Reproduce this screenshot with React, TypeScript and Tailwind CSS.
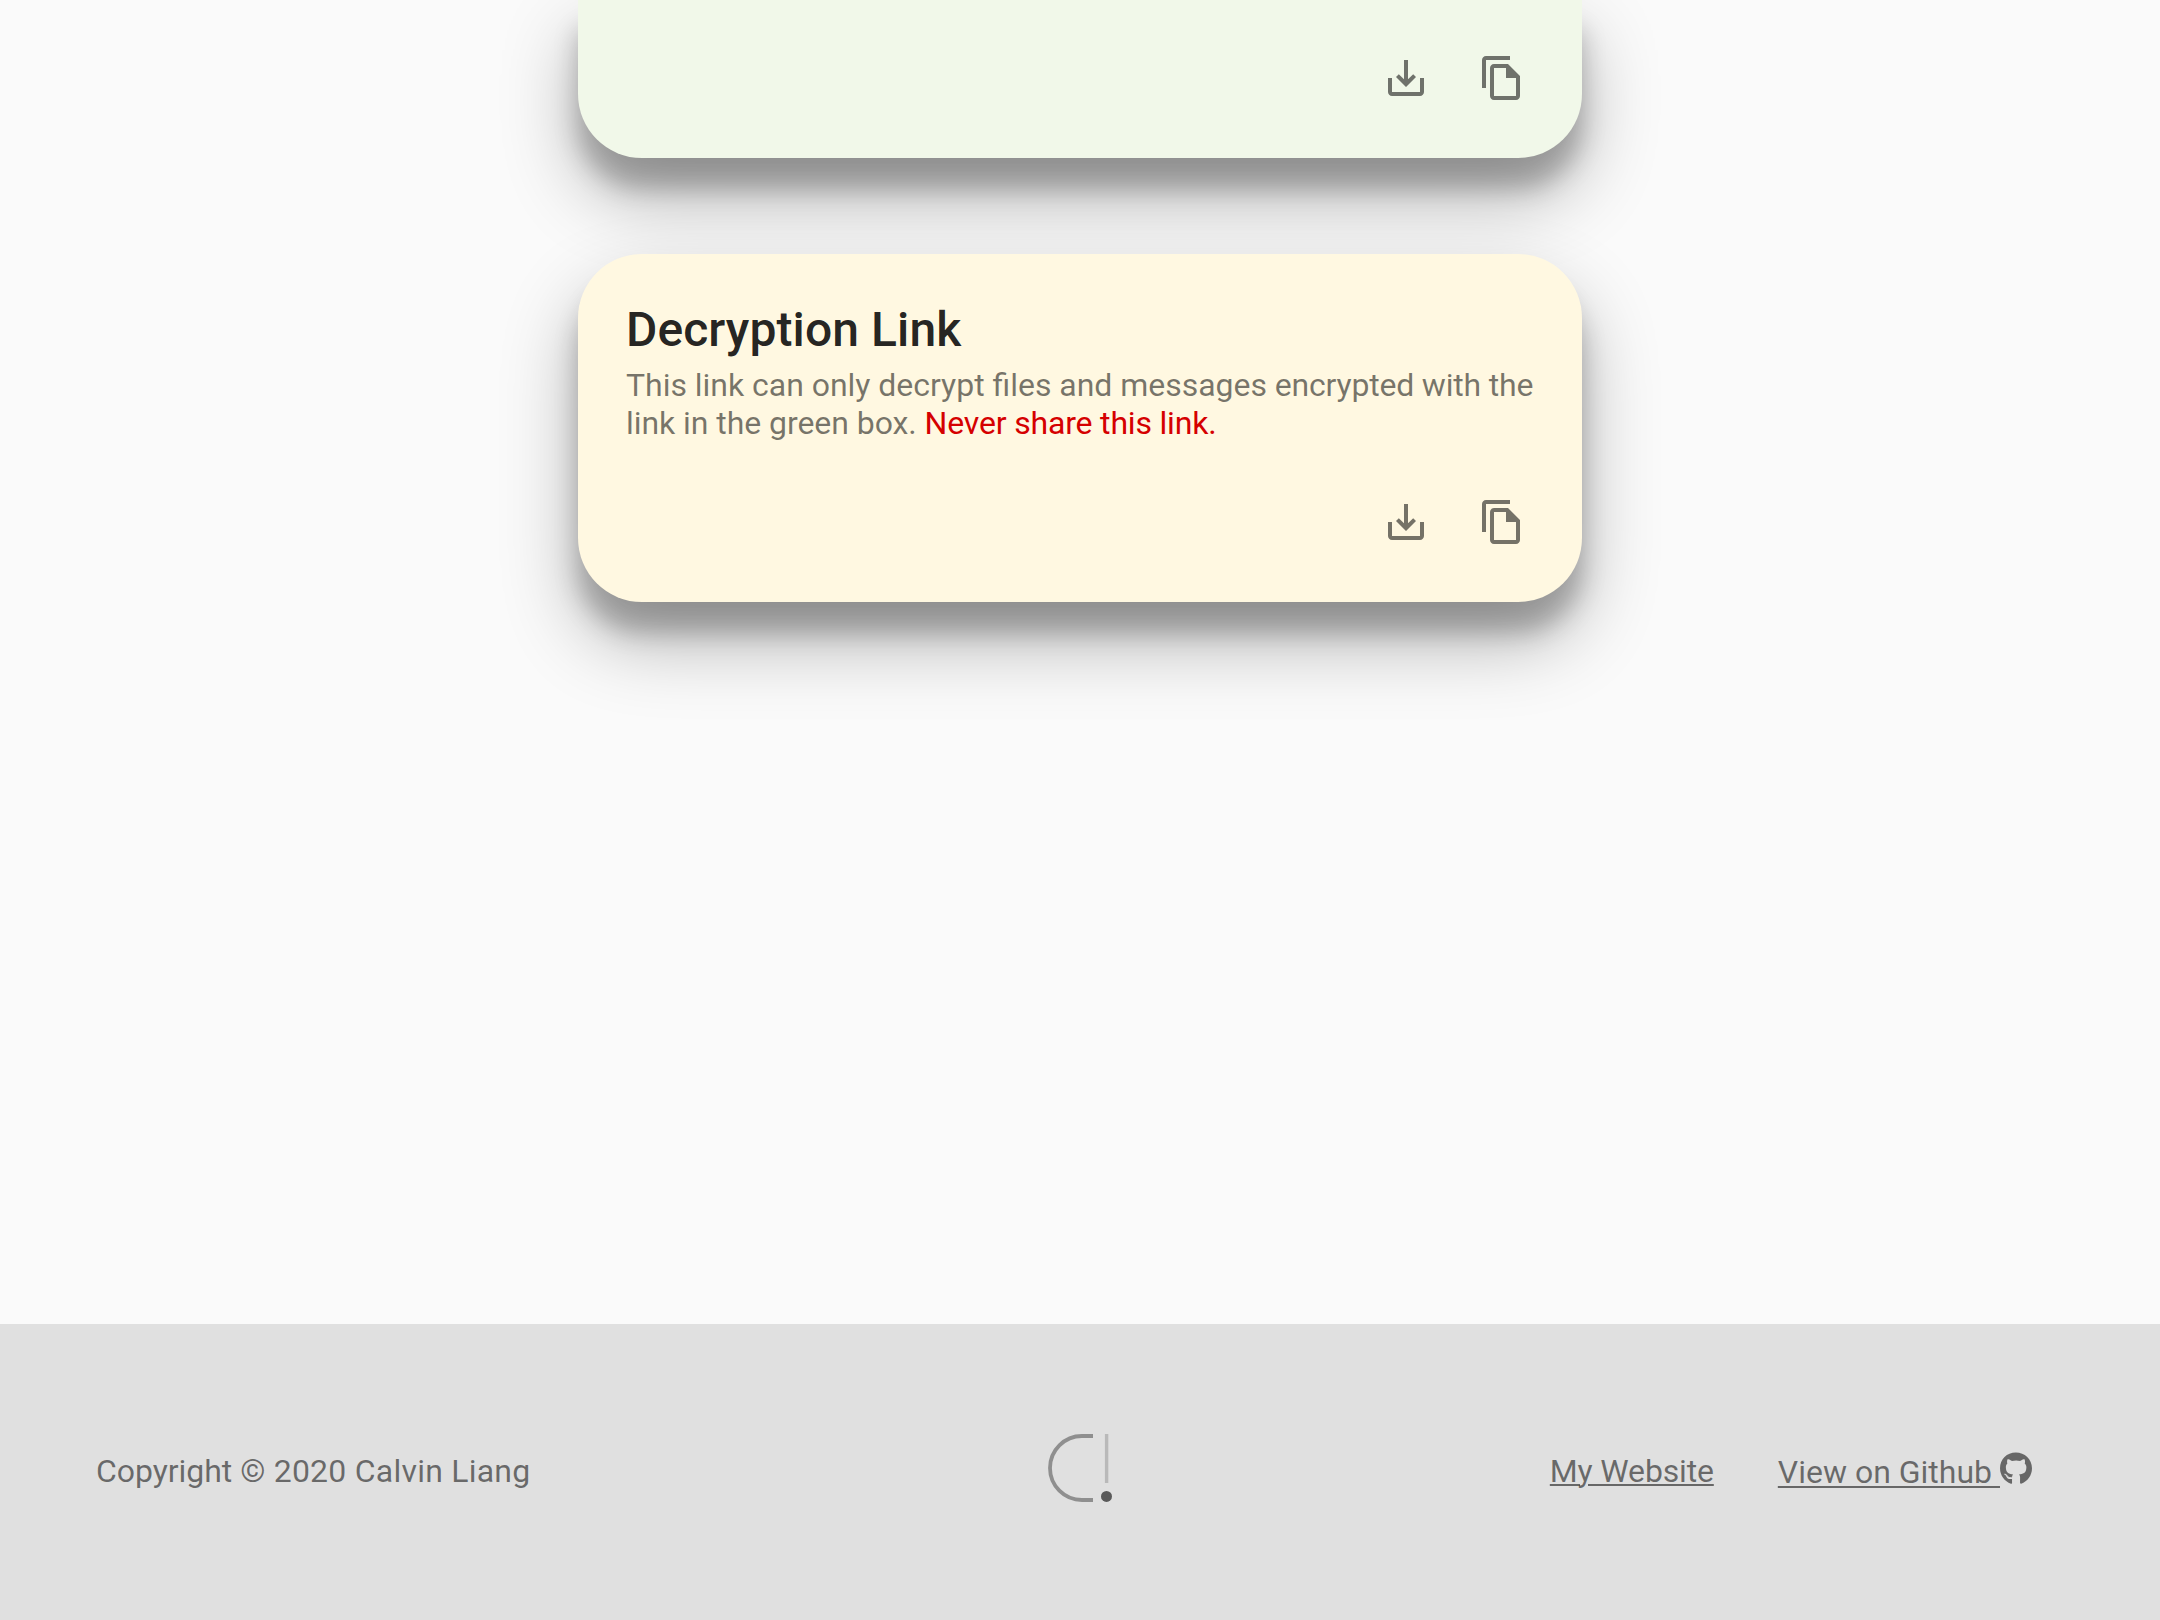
import React from "react";
import { FaGithub } from "react-icons/fa";

const SHADOW = "shadow-[0_38px_76px_rgba(0,0,0,0.3),0_30px_24px_rgba(0,0,0,0.22)]";

function Icon({ d }: { d: string }) {
  return (
    <button className="p-6 text-black/54">
      <svg viewBox="0 0 24 24" className="block size-12 fill-current">
        <path d={d} />
      </svg>
    </button>
  );
}

function Actions() {
  return (
    <div className="flex justify-end px-8 pb-8">
      <Icon d="M19 12v7H5v-7H3v7c0 1.1.9 2 2 2h14c1.1 0 2-.9 2-2v-7h-2zm-6 .67l2.59-2.58L17 11.5l-5 5-5-5 1.41-1.41L11 12.67V3h2z" />
      <Icon d="M16 1H4c-1.1 0-2 .9-2 2v14h2V3h12V1zm-1 4H8c-1.1 0-1.99.9-1.99 2L6 21c0 1.1.89 2 1.99 2H19c1.1 0 2-.9 2-2V11l-6-6zM8 21V7h6v5h5v9H8z" />
    </div>
  );
}

function Logo() {
  return (
    <svg viewBox="0 0 64 68" className="mb-2 block h-[68px] w-16" fill="none">
      <path d="M45 2H34a32 32 0 0 0 0 64H45" stroke="#8f8f8f" strokeWidth="3.8" />
      <path d="M58.6 0V49" stroke="#b9b9b9" strokeWidth="3.4" />
      <circle cx="58.5" cy="62.4" r="5.5" fill="#5a5a5a" />
    </svg>
  );
}

export default function App() {
  return (
    <div className="flex h-[1620px] w-[2160px] flex-col overflow-hidden bg-[#fafafa] font-['Roboto',sans-serif] text-black/87">
      <main className="flex flex-1 flex-col items-center gap-24">
        <section className={`flex h-[158px] w-[1004px] flex-col justify-end rounded-b-[64px] bg-[#f1f8e9] ${SHADOW}`}>
          <Actions />
        </section>
        <section className={`flex h-[348px] w-[1004px] flex-col justify-between rounded-[64px] bg-[#fff8e1] ${SHADOW}`}>
          <div className="px-12 pt-12">
            <h2 className="text-[48px] leading-[56px] font-medium tracking-[0.09px]">Decryption Link</h2>
            <p className="mt-2 text-[32px] leading-[38px] whitespace-nowrap text-black/54 [font-feature-settings:'liga']">
              <span className="tracking-[-0.03px]">This link can only decrypt files and messages </span>
              <span className="tracking-[-0.2px]">encrypted with the</span>
              <br />
              <span className="tracking-[-0.06px]">link in the green box. </span>
              <span className="tracking-[-0.18px] text-[#d50000]">Never share this link.</span>
            </p>
          </div>
          <Actions />
        </section>
      </main>
      <footer className="grid h-[296px] grid-cols-[1fr_64px_1fr] items-center bg-[#e0e0e0] px-24 text-[32px] leading-[38px] text-black/54">
        <p className="mb-0.5 tracking-[0.23px]">
          <span className="tracking-[-0.05px]">Copyright </span>© 2020 Calvin Liang
        </p>
        <Logo />
        <nav className="flex items-center justify-end gap-16 pr-8">
          <a className="mb-0.5 tracking-[-0.16px] underline decoration-2 underline-offset-2">My Website</a>
          <a className="flex items-center">
            <span className="whitespace-pre underline decoration-2 underline-offset-[3px]">View on Github </span>
            <FaGithub className="mb-2 h-[33px] w-8" />
          </a>
        </nav>
      </footer>
    </div>
  );
}
